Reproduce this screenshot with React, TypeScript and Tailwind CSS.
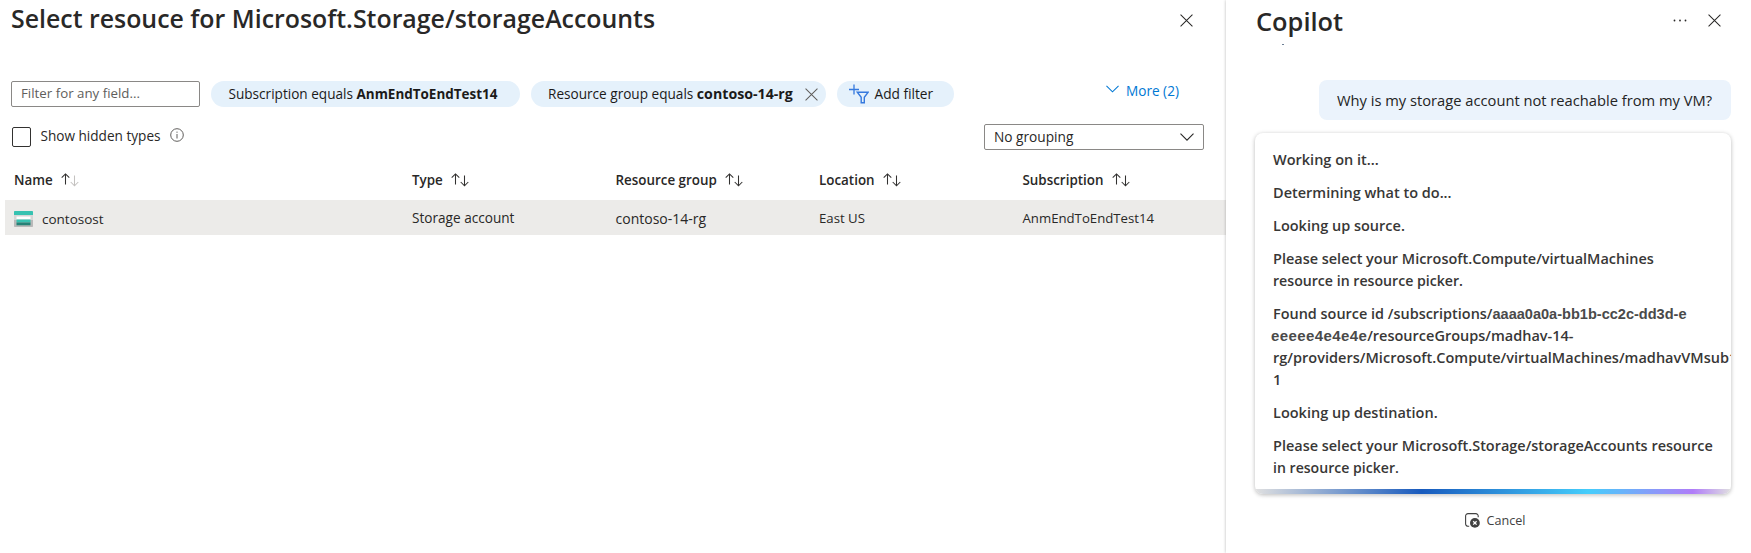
import type { ReactNode } from 'react';

function Close({ className }: { className: string }) {
  return (
    <svg className={className} viewBox="0 0 14 14" fill="none" stroke="currentColor" strokeWidth="1.1">
      <path d="M.6.6l12.8 12.8M13.4.6L.6 13.4" />
    </svg>
  );
}

function Chevron({ className }: { className: string }) {
  return (
    <svg className={className} viewBox="0 0 14 8" fill="none" stroke="currentColor" strokeWidth="1.1">
      <path d="M.5.6L7 7.1 13.5.6" />
    </svg>
  );
}

function SortArrows({ ascending = false }: { ascending?: boolean }) {
  return (
    <svg className="h-[14px] w-[19px] text-[#323130]" viewBox="0 0 19 14" fill="none" stroke="currentColor" strokeWidth="1.05">
      <path d="M4.5 11.5V.9M.7 4.7L4.5.9l3.8 3.8" />
      <path className={ascending ? 'text-[#c4c2c0]' : ''} stroke="currentColor" d="M13.5 2.5v10.3M9.7 9l3.8 3.8L17.3 9" />
    </svg>
  );
}

function InfoIcon() {
  return (
    <svg className="h-[14px] w-[14px] text-[#605e5c]" viewBox="0 0 14 14" fill="none" stroke="currentColor" strokeWidth="1">
      <circle cx="7" cy="7" r="6.3" />
      <path d="M7 6v4.5M7 3.6v1.2" />
    </svg>
  );
}

function AddFilterIcon() {
  return (
    <svg className="h-[20px] w-[20px] text-[#3579de]" viewBox="0 0 20 20" fill="none" stroke="currentColor" strokeWidth="1.4">
      <path strokeWidth="1.3" d="M5 .5v10M0 5.5h10" />
      <path d="M8.3 8.2h10.9l-3.9 5v5.6h-3.1v-5.6z" />
    </svg>
  );
}

function StorageIcon() {
  return (
    <svg className="h-[16px] w-[19px]" viewBox="0 0 19 16">
      <path fill="#b9b9b9" d="M0 3h19v12.2a.8.8 0 0 1-.8.8H.8a.8.8 0 0 1-.8-.8z" />
      <path fill="#d6d6d6" d="M0 3h19v6H0z" />
      <path fill="#37c2b1" d="M.8 0h17.4a.8.8 0 0 1 .8.8V4H0V.8A.8.8 0 0 1 .8 0z" />
      <path fill="#ffffff" d="M2.5 5.5h14v3h-14z" />
      <path fill="#37c2b1" d="M2.5 8.5h14v3h-14z" />
      <path fill="#258277" d="M2.5 11.5h14v2.8h-14z" />
    </svg>
  );
}

function CancelIcon() {
  return (
    <svg className="h-[15px] w-[15px] text-[#424242]" viewBox="0 0 15 15" fill="none" stroke="currentColor">
      <path strokeWidth="1.1" d="M4.2 13.2H3A2.4 2.4 0 0 1 .6 10.8V3A2.4 2.4 0 0 1 3 .6h7.8A2.4 2.4 0 0 1 13.2 3v1.2" />
      <circle cx="9.9" cy="9.9" r="4.9" fill="currentColor" stroke="none" />
      <path stroke="#fff" strokeWidth="1.3" d="M8.2 8.2l3.4 3.4M11.6 8.2l-3.4 3.4" />
    </svg>
  );
}

function HeaderCell({ children, ascending }: { children: ReactNode; ascending?: boolean }) {
  return (
    <div className="flex items-center gap-[8.5px] text-[13.4px] font-semibold">
      <span>{children}</span>
      <SortArrows ascending={ascending} />
    </div>
  );
}

function ResourcePicker() {
  return (
    <main className="w-[1226px] shrink-0">
      <header className="flex h-[81px] items-start justify-between pt-[2px] pr-[33px] pl-[11px]">
        <h1 className="text-[24.9px] leading-[33px] font-semibold">
          Select resouce for Microsoft.Storage/storageAccounts
        </h1>
        <button className="mt-[12px]">
          <Close className="h-[13px] w-[13px]" />
        </button>
      </header>

      <div className="flex h-[26px] items-start pl-[11px] text-[13.6px] leading-[26px] text-[#1b1a19]">
        <div className="h-[26px] w-[189px] rounded-[2px] border border-[#8a8886] bg-white pl-[9px] text-[13.3px] leading-[23px] text-[#605e5c]">
          Filter for any field...
        </div>
        <div className="ml-[11px] h-[26px] w-[309px] rounded-full bg-[#e5f1fb] pl-[17.5px] whitespace-pre">
          Subscription equals <b className="text-[13.46px]">AnmEndToEndTest14</b>
        </div>
        <div className="ml-[11px] flex h-[26px] w-[295px] items-center rounded-full bg-[#e5f1fb] pl-[17px]">
          <span className="w-[257px] whitespace-pre">
            Resource group equals <b className="text-[14.2px]">contoso-14-rg</b>
          </span>
          <Close className="h-[13px] w-[13px] text-[#605e5c]" />
        </div>
        <div className="ml-[11px] flex h-[26px] w-[117px] items-center gap-[5.5px] rounded-full bg-[#e5f1fb] pl-[12px]">
          <AddFilterIcon />
          <span className="text-[13.7px]">Add filter</span>
        </div>
        <button className="mt-[-3px] ml-[152px] flex items-center gap-[7px] text-[#0078d4]">
          <Chevron className="mt-[-4px] h-[8px] w-[13px]" />
          <span>More (2)</span>
        </button>
      </div>

      <div className="mt-[17px] flex h-[26px] items-start justify-between pr-[22px] pl-[12px] text-[13.6px]">
        <label className="flex items-center">
          <span className="mt-[1px] h-[20px] w-[19px] rounded-[2px] border border-[#323130]" />
          <span className="ml-[9.5px] leading-[24px]">Show hidden types</span>
          <span className="mt-[-3px] ml-[9px]">
            <InfoIcon />
          </span>
        </label>
        <div className="flex h-[26px] w-[220px] items-center justify-between rounded-[2px] border border-[#8a8886] pr-[9px] pl-[9px]">
          <span className="text-[13.7px]">No grouping</span>
          <Chevron className="h-[8px] w-[14px]" />
        </div>
      </div>

      <div className="pl-[5px]">
        <div className="mt-[10px] grid h-[40px] grid-cols-[398px_203.5px_203.5px_203.5px_1fr] items-center pl-[9px]">
          <HeaderCell ascending>Name</HeaderCell>
          <HeaderCell>Type</HeaderCell>
          <HeaderCell>Resource group</HeaderCell>
          <HeaderCell>Location</HeaderCell>
          <HeaderCell>Subscription</HeaderCell>
        </div>
        <div className="grid h-[35px] grid-cols-[398px_203.5px_203.5px_203.5px_1fr] items-center bg-[#ecebe9] pt-[2px] pl-[9px] text-[13.6px]">
          <div className="flex items-center gap-[9px] pt-[1px]">
            <StorageIcon />
            <span className="text-[13.5px]">contosost</span>
          </div>
          <span>Storage account</span>
          <span className="text-[14px]">contoso-14-rg</span>
          <span className="text-[13.2px]">East US</span>
          <span className="text-[13.2px]">AnmEndToEndTest14</span>
        </div>
      </div>
    </main>
  );
}

function CopilotPanel() {
  return (
    <aside className="flex min-w-0 flex-1 flex-col bg-white pr-[20px] pl-[29px] shadow-[0_0_3px_rgba(0,0,0,0.28)]">
      <header className="flex h-[43px] items-start justify-between pr-[10px]">
        <h2 className="pt-[4px] pl-px text-[25.4px] leading-[34px] font-semibold">Copilot</h2>
        <div className="flex items-center gap-[21px] pt-[14px]">
          <svg className="h-[13px] w-[14px]" viewBox="0 0 14 13" fill="currentColor">
            <circle cx="1.5" cy="6.5" r=".9" />
            <circle cx="7" cy="6.5" r=".9" />
            <circle cx="12.5" cy="6.5" r=".9" />
          </svg>
          <Close className="h-[13px] w-[13px]" />
        </div>
      </header>
      <div className="flex h-[37px] pt-[1px] pl-[27px]">
        <span className="h-px w-[2px] bg-[#6d7f95]" />
      </div>

      <div className="flex h-[40px] w-[412px] items-center self-end rounded-[8px] bg-[#ebf3fc] pl-[18px] text-[14.7px] whitespace-nowrap text-[#242424]">
        Why is my storage account not reachable from my VM?
      </div>

      <section className="mt-[13px] overflow-hidden rounded-[8px] bg-white shadow-[0_1px_4px_rgba(0,0,0,0.28)]">
        <div className="flex flex-col gap-[11px] px-[18px] pt-[16px] pb-[10px] text-[14.5px] leading-[22px] font-semibold whitespace-nowrap text-[#383736]">
          <p>Working on it...</p>
          <p>Determining what to do...</p>
          <p>Looking up source.</p>
          <p>
            <span className="text-[14.46px]">Please select your Microsoft.Compute/virtualMachines</span>
            <br />
            <span className="text-[14.15px]">resource in resource picker.</span>
          </p>
          <p>
            <span className="text-[14.45px]">Found source id /subscriptions/</span>
            <span className="font-['Liberation_Sans',sans-serif] text-[14.55px] font-bold text-[#4a4a4a]">
              aaaa0a0a-bb1b-cc2c-dd3d-e
            </span>
            <br />
            <span className="ml-[-2px] font-['Liberation_Sans',sans-serif] text-[15px] font-bold tracking-[0.4px] text-[#4a4a4a]">
              eeeee4e4e4e
            </span>
            /resourceGroups/madhav-14-
            <br />
            <span className="tracking-[0.02px]">rg/providers/Microsoft.Compute/virtualMachines/madhavVMsub1</span>
            <br />1
          </p>
          <p>Looking up destination.</p>
          <p>
            <span className="text-[14.46px]">Please select your Microsoft.Storage/storageAccounts resource</span>
            <br />
            <span className="text-[14.1px]">in resource picker.</span>
          </p>
        </div>
        <div className="h-[5px] bg-[linear-gradient(90deg,#e0e0e0_0%,#185abd_35%,#45cdfb_70%,#b07cf8_92%,#e0e0e0_100%)]" />
      </section>

      <button className="mt-[17px] flex items-center justify-center gap-[7px] pl-[4px] text-[12.6px] leading-[19px] text-[#424242]">
        <CancelIcon />
        <span>Cancel</span>
      </button>
    </aside>
  );
}

export default function App() {
  return (
    <div className="flex h-[553px] w-[1751px] overflow-hidden bg-white font-['Open_Sans','Noto_Sans',sans-serif] text-[#292827]">
      <ResourcePicker />
      <CopilotPanel />
    </div>
  );
}
